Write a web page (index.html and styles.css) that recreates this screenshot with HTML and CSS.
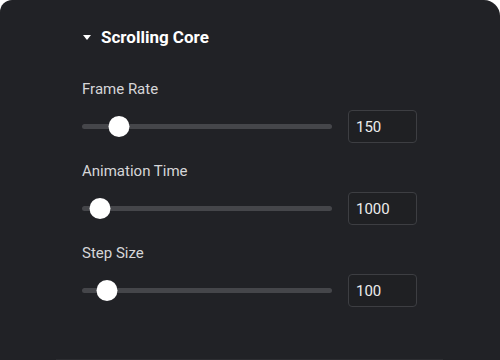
FILE: index.html
```html
<!DOCTYPE html>
<html lang="en">
<head>
  <meta charset="UTF-8">
  <title>Scrolling Core</title>
  <link rel="stylesheet" href="styles.css">
</head>
<body>
  <div class="panel">
    <div class="section-head">
      <span class="caret"></span>
      <span class="section-title">Scrolling Core</span>
    </div>

    <div class="field">
      <div class="label">Frame Rate</div>
      <div class="control">
        <div class="slider">
          <div class="track"></div>
          <div class="thumb" style="left: 14.8%;"></div>
        </div>
        <input class="num" type="text" value="150">
      </div>
    </div>

    <div class="field">
      <div class="label">Animation Time</div>
      <div class="control">
        <div class="slider">
          <div class="track"></div>
          <div class="thumb" style="left: 7.2%;"></div>
        </div>
        <input class="num" type="text" value="1000">
      </div>
    </div>

    <div class="field">
      <div class="label">Step Size</div>
      <div class="control">
        <div class="slider">
          <div class="track"></div>
          <div class="thumb" style="left: 10%;"></div>
        </div>
        <input class="num" type="text" value="100">
      </div>
    </div>

    <div class="next-section"></div>
  </div>
</body>
</html>
```

FILE: styles.css
```css
body {
  margin: 0;
  background: #ffffff;
  font-family: Roboto, "Liberation Sans", sans-serif;
}

.panel {
  width: 500px;
  height: 360px;
  box-sizing: border-box;
  background: #212226;
  border-radius: 12px 16px 0 0;
  padding: 27px 0 0 82px;
  overflow: hidden;
}

.section-head {
  display: flex;
  align-items: center;
  gap: 10px;
  height: 20px;
  margin-left: 1px;
}

.caret {
  width: 0;
  height: 0;
  border-left: 4.5px solid transparent;
  border-right: 4.5px solid transparent;
  border-top: 5px solid #ffffff;
  margin-top: 1px;
}

.section-title {
  color: #ffffff;
  font-size: 17px;
  line-height: 20px;
  font-weight: bold;
}

.field {
  margin-top: 33px;
}

.field + .field {
  margin-top: 19px;
}

.label {
  color: #d6d6d8;
  font-size: 15px;
  line-height: 18px;
}

.control {
  display: flex;
  align-items: center;
  gap: 16px;
  margin-top: 12px;
  height: 33px;
}

.slider {
  position: relative;
  width: 250px;
  height: 21px;
  display: flex;
  align-items: center;
}

.track {
  width: 100%;
  height: 5px;
  border-radius: 3px;
  background: #45464a;
}

.thumb {
  position: absolute;
  top: 0;
  width: 21px;
  height: 21px;
  border-radius: 50%;
  background: #ffffff;
  transform: translateX(-50%);
}

.num {
  width: 69px;
  height: 33px;
  box-sizing: border-box;
  padding: 0 0 0 7px;
  border: 1px solid #3d3e42;
  border-radius: 4px;
  background: #1f2023;
  color: #ececec;
  font-family: Roboto, "Liberation Sans", sans-serif;
  font-size: 15px;
  outline: none;
}

.next-section {
  margin: 52px 0 0 -26px;
  width: 387px;
  border-top: 2px solid #2c2d31;
}
```
